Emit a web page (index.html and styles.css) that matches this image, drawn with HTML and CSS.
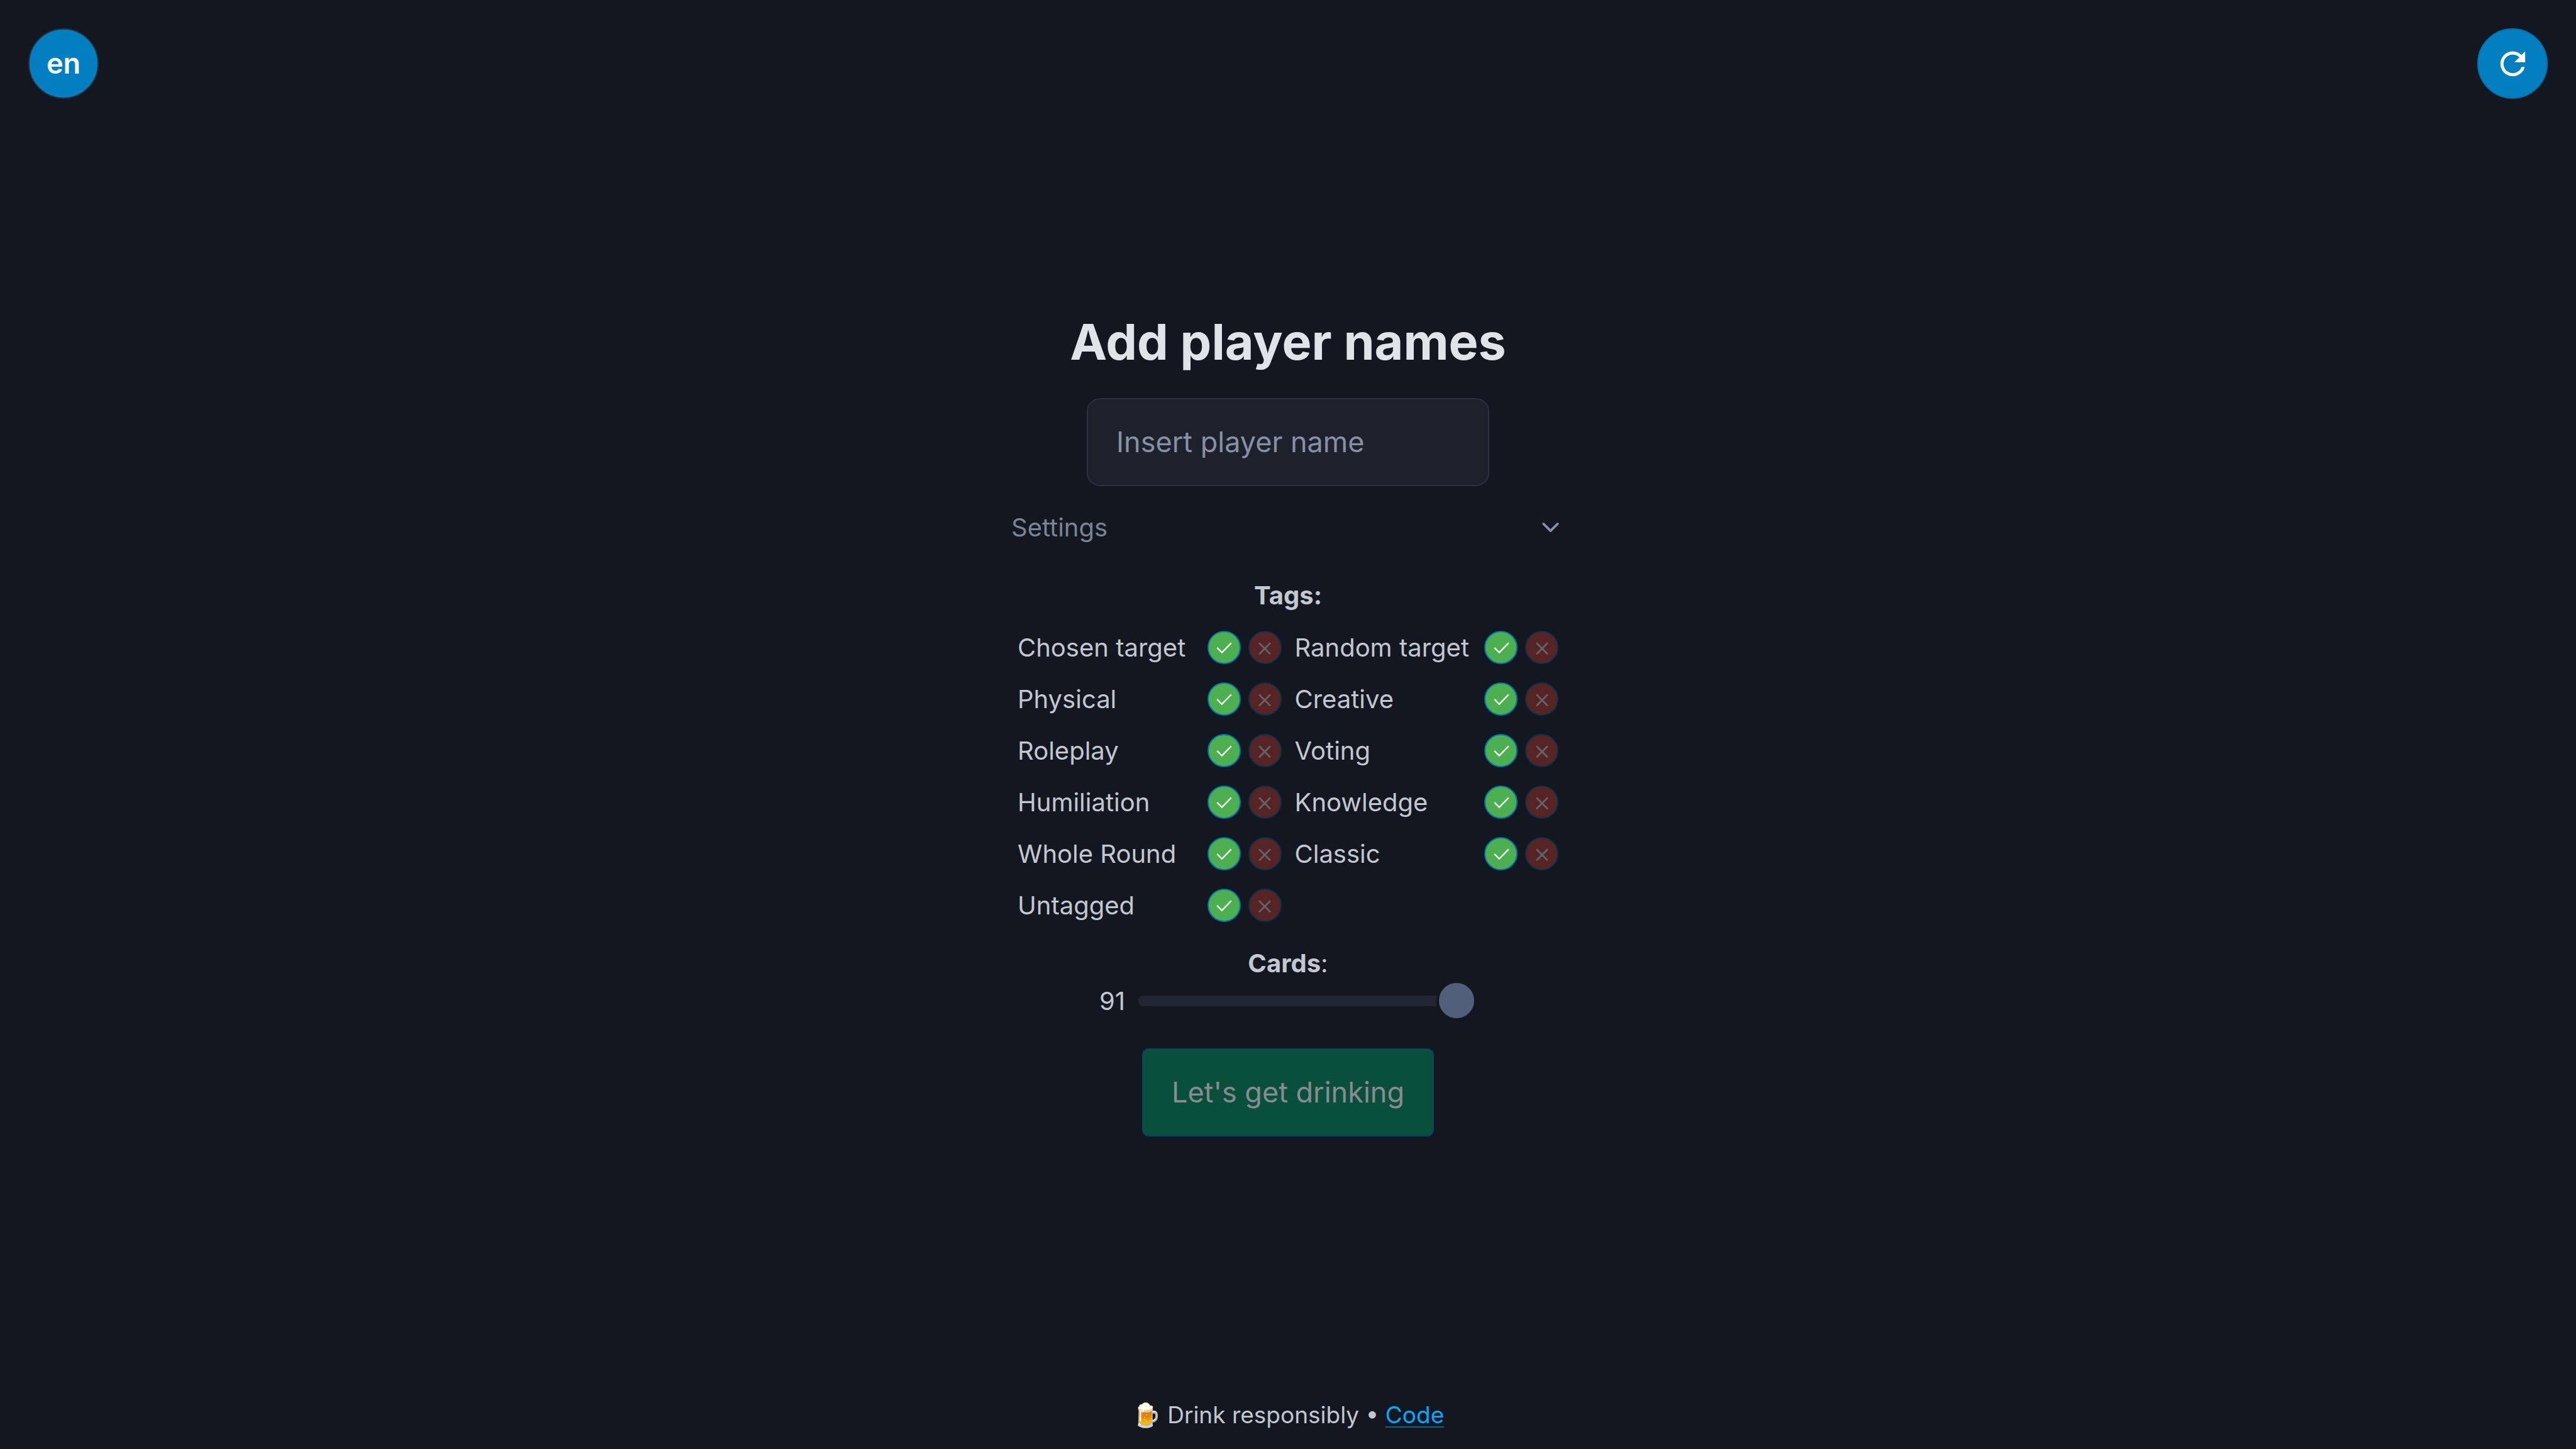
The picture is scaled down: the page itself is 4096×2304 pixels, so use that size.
FILE: index.html
```html
<!DOCTYPE html>
<html lang="en">
<head>
<meta charset="utf-8">
<meta name="viewport" content="width=device-width, initial-scale=1">
<title>Add player names</title>
<link rel="stylesheet" href="styles.css">
</head>
<body>
<svg class="sprite" aria-hidden="true">
  <symbol id="check" viewBox="0 0 24 24"><path d="M9.8 16.2 5 11.3 3.8 12.5 9.8 18.5 20.9 7.2 19.7 6z"/></symbol>
  <symbol id="cross" viewBox="0 0 24 24"><path d="M19 7.3 17.6 5.9 12 11.5 6.4 5.9 5 7.3 10.6 12.9 5 18.5 6.4 19.9 12 14.3 17.6 19.9 19 18.5 13.4 12.9z"/></symbol>
</svg>
<header class="topbar">
  <button class="round language" type="button">en</button>
  <button class="round" type="button" aria-label="Restart">
    <svg class="refresh" viewBox="0 0 24 24"><path d="M17.65 6.35C16.2 4.9 14.21 4 12 4c-4.42 0-7.99 3.58-7.99 8s3.57 8 7.99 8c3.73 0 6.84-2.55 7.73-6h-2.08c-.82 2.33-3.04 4-5.65 4-3.31 0-6-2.69-6-6s2.69-6 6-6c1.66 0 3.14.69 4.22 1.78L13 11h7V4l-2.35 2.35z"/></svg>
  </button>
</header>
<main class="setup">
  <h1 class="title">Add player names</h1>
  <input class="name-input" type="text" placeholder="Insert player name" aria-label="Player name">
  <details class="settings" open>
    <summary class="summary">Settings
      <svg class="chevron" viewBox="0 0 24 24"><polyline points="6 9 12 15 18 9"/></svg>
    </summary>
    <h2 class="subtitle">Tags:</h2>
    <div class="tags">
      <div class="tag"><span class="tag-name">Chosen target</span><button class="toggle include" type="button" aria-label="Include Chosen target"><svg class="mark"><use href="#check"/></svg></button><button class="toggle exclude" type="button" aria-label="Exclude Chosen target"><svg class="mark"><use href="#cross"/></svg></button></div>
      <div class="tag"><span class="tag-name">Random target</span><button class="toggle include" type="button" aria-label="Include Random target"><svg class="mark"><use href="#check"/></svg></button><button class="toggle exclude" type="button" aria-label="Exclude Random target"><svg class="mark"><use href="#cross"/></svg></button></div>
      <div class="tag"><span class="tag-name">Physical</span><button class="toggle include" type="button" aria-label="Include Physical"><svg class="mark"><use href="#check"/></svg></button><button class="toggle exclude" type="button" aria-label="Exclude Physical"><svg class="mark"><use href="#cross"/></svg></button></div>
      <div class="tag"><span class="tag-name">Creative</span><button class="toggle include" type="button" aria-label="Include Creative"><svg class="mark"><use href="#check"/></svg></button><button class="toggle exclude" type="button" aria-label="Exclude Creative"><svg class="mark"><use href="#cross"/></svg></button></div>
      <div class="tag"><span class="tag-name">Roleplay</span><button class="toggle include" type="button" aria-label="Include Roleplay"><svg class="mark"><use href="#check"/></svg></button><button class="toggle exclude" type="button" aria-label="Exclude Roleplay"><svg class="mark"><use href="#cross"/></svg></button></div>
      <div class="tag"><span class="tag-name">Voting</span><button class="toggle include" type="button" aria-label="Include Voting"><svg class="mark"><use href="#check"/></svg></button><button class="toggle exclude" type="button" aria-label="Exclude Voting"><svg class="mark"><use href="#cross"/></svg></button></div>
      <div class="tag"><span class="tag-name">Humiliation</span><button class="toggle include" type="button" aria-label="Include Humiliation"><svg class="mark"><use href="#check"/></svg></button><button class="toggle exclude" type="button" aria-label="Exclude Humiliation"><svg class="mark"><use href="#cross"/></svg></button></div>
      <div class="tag"><span class="tag-name">Knowledge</span><button class="toggle include" type="button" aria-label="Include Knowledge"><svg class="mark"><use href="#check"/></svg></button><button class="toggle exclude" type="button" aria-label="Exclude Knowledge"><svg class="mark"><use href="#cross"/></svg></button></div>
      <div class="tag"><span class="tag-name">Whole Round</span><button class="toggle include" type="button" aria-label="Include Whole Round"><svg class="mark"><use href="#check"/></svg></button><button class="toggle exclude" type="button" aria-label="Exclude Whole Round"><svg class="mark"><use href="#cross"/></svg></button></div>
      <div class="tag"><span class="tag-name">Classic</span><button class="toggle include" type="button" aria-label="Include Classic"><svg class="mark"><use href="#check"/></svg></button><button class="toggle exclude" type="button" aria-label="Exclude Classic"><svg class="mark"><use href="#cross"/></svg></button></div>
      <div class="tag"><span class="tag-name">Untagged</span><button class="toggle include" type="button" aria-label="Include Untagged"><svg class="mark"><use href="#check"/></svg></button><button class="toggle exclude" type="button" aria-label="Exclude Untagged"><svg class="mark"><use href="#cross"/></svg></button></div>
    </div>
    <label class="cards-label" for="cards"><strong>Cards</strong>:</label>
    <div class="cards">
      <output for="cards">91</output>
      <input class="slider" id="cards" type="range" min="1" max="91" value="91">
    </div>
  </details>
  <button class="start" type="button" disabled>Let's get drinking</button>
</main>
<footer class="footer">🍺 Drink responsibly • <a class="link" href="#code">Code</a></footer>
</body>
</html>
```
FILE: styles.css
```css
* {
  box-sizing: border-box;
}

body {
  margin: 0;
  min-height: 100vh;
  display: grid;
  grid-template-rows: 1fr auto 1fr;
  background: #13171f;
  color: #c2c7d0;
  font-family: Inter, "Noto Sans", sans-serif;
  font-size: 40px;
  line-height: 60px;
}

button,
input {
  margin: 0;
  font: inherit;
}

button {
  display: flex;
  align-items: center;
  justify-content: center;
  padding: 0;
}

.sprite {
  position: absolute;
  width: 0;
  height: 0;
}

.topbar {
  display: flex;
  justify-content: space-between;
  align-items: flex-start;
  padding: 45px;
}

.round {
  width: 112px;
  height: 112px;
  border: 2px solid #0172ad;
  border-radius: 50%;
  background: #017fc0;
  color: #fff;
}

.language {
  border-color: #2a3140;
  font-size: 45px;
  font-weight: 600;
}

.refresh {
  width: 59px;
  height: 59px;
  fill: currentColor;
}

.setup {
  display: flex;
  flex-direction: column;
  align-items: center;
}

.title {
  margin: 0 0 45px;
  color: #e0e3e7;
  font-size: 79px;
  font-weight: 700;
  line-height: 90px;
}

.name-input {
  width: 640px;
  height: 140px;
  padding: 0 45px;
  border: 2px solid #2a3140;
  border-radius: 21px;
  background: #1c212c;
  color: #e0e3e7;
  font-size: 45px;
}

.name-input::placeholder {
  color: #8891a4;
  opacity: 1;
}

.settings {
  width: 880px;
  max-width: 100%;
  margin: 36px 0 45px;
}

.summary {
  display: flex;
  align-items: center;
  justify-content: space-between;
  color: #7b8495;
  list-style: none;
}

.chevron {
  width: 45px;
  height: 45px;
  fill: none;
  stroke: #8891a4;
  stroke-width: 2;
  stroke-linecap: round;
  stroke-linejoin: round;
}

.subtitle {
  margin: 48px 0 12px;
  font-size: inherit;
  font-weight: 700;
  text-align: center;
}

.tags {
  display: grid;
  grid-template-columns: 1fr 1fr;
  grid-auto-rows: 82px;
  column-gap: 21px;
  padding: 0 10px;
}

.tag {
  display: flex;
  align-items: center;
  gap: 12px;
}

.tag-name {
  flex: 1;
}

.toggle {
  width: 53px;
  height: 53px;
  border: 2px solid #0172ad;
  border-radius: 50%;
  color: #fff;
}

.include {
  background: #4caf50;
}

.exclude {
  border-color: #0d324b;
  background: #562424;
  color: #61646a;
}

.mark {
  width: 34px;
  height: 34px;
  flex: none;
  fill: currentColor;
}

.cards-label {
  display: block;
  margin-top: 21px;
  text-align: center;
}

.cards {
  display: flex;
  align-items: center;
  justify-content: center;
  gap: 21px;
}

.slider {
  appearance: none;
  width: 538px;
  height: 60px;
  background: transparent;
}

.slider::-webkit-slider-runnable-track {
  height: 17px;
  border-radius: 8px;
  background: #202632;
}

.slider::-webkit-slider-thumb {
  appearance: none;
  box-sizing: border-box;
  width: 64px;
  height: 64px;
  margin-top: -24px;
  border: 4px solid #13171f;
  border-radius: 50%;
  background: #525f7a;
}

.start {
  height: 140px;
  padding: 0 45px;
  border: 2px solid #084562;
  border-radius: 11px;
  background: #08503c;
  color: #898b8e;
  font-size: 45px;
}

.footer {
  align-self: end;
  padding-bottom: 24px;
  font-size: 37px;
  text-align: center;
}

.link {
  color: #01aaff;
  text-decoration: underline #0a6596 2px;
  text-underline-offset: 5px;
}
```
